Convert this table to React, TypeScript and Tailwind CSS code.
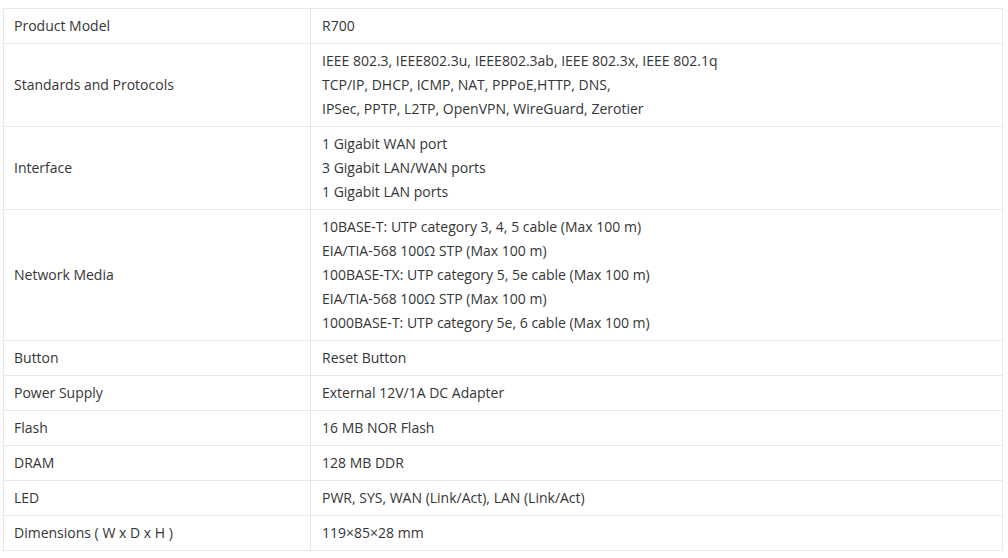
import React from "react";

const rows: [string, string[]][] = [
  ["Product Model", ["R700"]],
  [
    "Standards and Protocols",
    [
      "IEEE 802.3, IEEE802.3u, IEEE802.3ab, IEEE 802.3x, IEEE 802.1q",
      "TCP/IP, DHCP, ICMP, NAT, PPPoE,HTTP, DNS,",
      "IPSec, PPTP, L2TP, OpenVPN, WireGuard, Zerotier",
    ],
  ],
  ["Interface", ["1 Gigabit WAN port", "3 Gigabit LAN/WAN ports", "1 Gigabit LAN ports"]],
  [
    "Network Media",
    [
      "10BASE-T: UTP category 3, 4, 5 cable (Max 100 m)",
      "EIA/TIA-568 100Ω STP (Max 100 m)",
      "100BASE-TX: UTP category 5, 5e cable (Max 100 m)",
      "EIA/TIA-568 100Ω STP (Max 100 m)",
      "1000BASE-T: UTP category 5e, 6 cable (Max 100 m)",
    ],
  ],
  ["Button", ["Reset Button"]],
  ["Power Supply", ["External 12V/1A DC Adapter"]],
  ["Flash", ["16 MB NOR Flash"]],
  ["DRAM", ["128 MB DDR"]],
  ["LED", ["PWR, SYS, WAN (Link/Act), LAN (Link/Act)"]],
  ["Dimensions ( W x D x H )", ["119×85×28 mm"]],
];

export default function App() {
  return (
    <div className="w-[1008px] h-[558px] bg-white pt-[8px] pl-[3px] text-[#353535] text-[14px] leading-[24px] [font-family:'Open_Sans','Noto_Sans',sans-serif]">
      <table className="w-[1000px] border-collapse">
        <tbody>
          {rows.map(([k, v]) => (
            <tr key={k}>
              <td className="w-[307px] border border-[#e8e8e8] pl-[10px] py-[5px] align-middle">{k}</td>
              <td className="border border-[#e8e8e8] pl-[11px] py-[5px] align-middle">
                {v.map((l) => (
                  <div key={l}>{l}</div>
                ))}
              </td>
            </tr>
          ))}
        </tbody>
      </table>
    </div>
  );
}
